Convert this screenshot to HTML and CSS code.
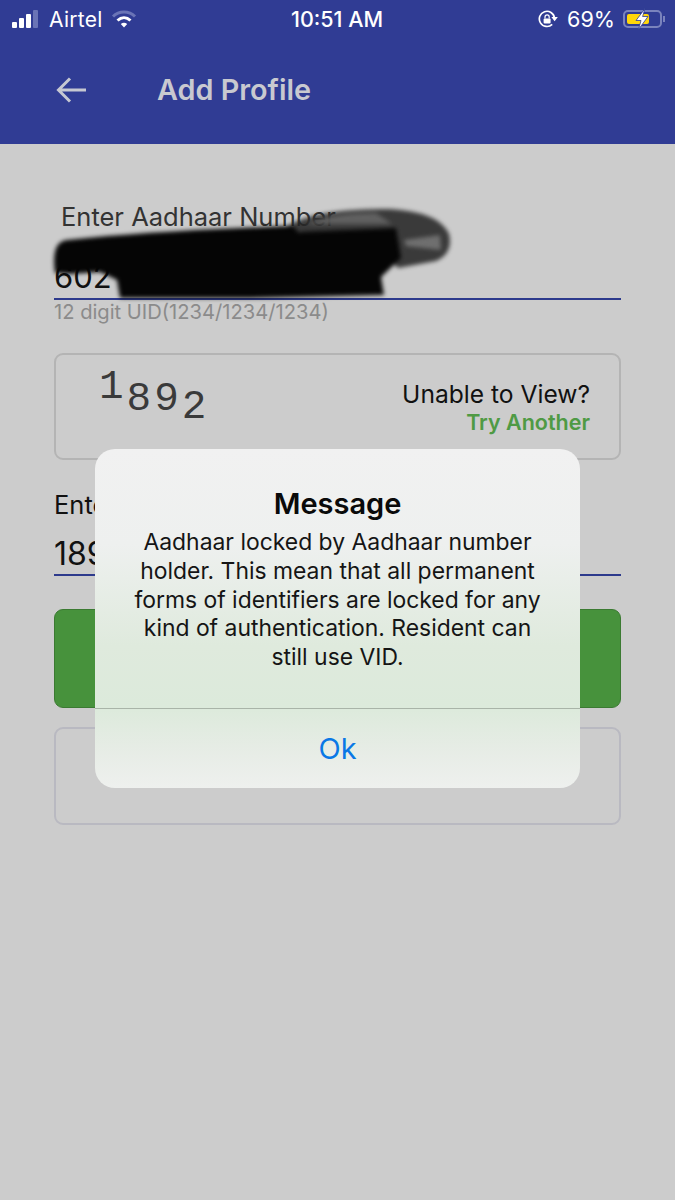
FILE: index.html
```html
<!DOCTYPE html>
<html lang="en">

<head>
    <meta charset="UTF-8">
    <meta name="viewport" content="width=device-width, initial-scale=1.0">
    <title>Add Profile</title>
    <link rel="stylesheet" href="styles.css">
</head>

<body>

    <div class="header">
        <div class="status-bar">
            <div class="status-left">
                <div class="signal">
                    <span class="bar bar-1"></span>
                    <span class="bar bar-2"></span>
                    <span class="bar bar-3"></span>
                    <span class="bar bar-4"></span>
                </div>
                <span class="carrier">Airtel</span>
                <svg class="wifi" width="26" height="20" viewBox="0 0 26 20">
                    <path d="M2 7.5C8 1.5 18 1.5 24 7.5" fill="none" stroke="#6a74b6" stroke-width="3" />
                    <path d="M6.5 11.5C10.5 7.8 15.5 7.8 19.5 11.5" fill="none" stroke="#fff" stroke-width="3" />
                    <path d="M9.8 15L13 18.5L16.2 15C14.2 13.4 11.8 13.4 9.8 15Z" fill="#fff" />
                </svg>
            </div>
            <span class="clock">10:51 AM</span>
            <div class="status-right">
                <svg class="rotation-lock" width="20" height="20" viewBox="0 0 20 20">
                    <path d="M14.2 15.4A7.6 7.6 0 1 1 16.5 9" fill="none" stroke="#fff" stroke-width="1.7" />
                    <path d="M13.4 8L19.8 8L16.6 12.2Z" fill="#fff" />
                    <rect x="5.6" y="9.4" width="7" height="5" rx="1" fill="#fff" />
                    <path d="M7 9.4V8A2.1 2.1 0 0 1 11.2 8V9.4" fill="none" stroke="#fff" stroke-width="1.2" />
                </svg>
                <span class="percent">69%</span>
                <div class="battery">
                    <div class="battery-body">
                        <div class="battery-level"></div>
                    </div>
                    <span class="battery-nub"></span>
                    <svg class="bolt" width="14" height="22" viewBox="0 0 14 22">
                        <path d="M10 0.5L1 12.5H6L3.5 21.5L13 8.5H7.6Z" fill="#fff" stroke="#303c94" stroke-width="0.8" />
                    </svg>
                </div>
            </div>
        </div>
        <div class="toolbar">
            <svg class="back" width="32" height="28" viewBox="0 0 32 28">
                <path d="M30 14H3M14 2.5L2.5 14L14 25.5" fill="none" stroke="#c6c8d2" stroke-width="3" />
            </svg>
            <h1 class="title">Add Profile</h1>
        </div>
    </div>

    <div class="form">
        <div class="aadhaar-field">
            <label class="label label-top">Enter Aadhaar Number</label>
            <div class="input-value">602</div>
            <svg class="scribble" width="420" height="110" viewBox="40 195 420 110">
                <path class="scribble-light" d="M284 228C305 214 340 209 390 209C420 211 442 218 449 234C452 246 448 256 436 261L398 268L380 250Z" />
                <path class="scribble-top" d="M306 224C325 216 350 213 376 213L392 224Z" />
                <path class="scribble-band" d="M404 240L440 235L441 250L406 246Z" />
                <path d="M55 273C52 250 57 241 67 240L87 238C150 232 230 228 292 226L299 232L396 228L401 258L381 277L384 295L250 298L120 298L117 280L100 272L70 274Z" fill="#050505" />
            </svg>
        </div>
        <p class="hint">12 digit UID(1234/1234/1234)</p>

        <div class="captcha-box">
            <div class="captcha"><span class="digit-1">1</span><span class="digit-2">8</span><span class="digit-3">9</span><span class="digit-4">2</span></div>
            <div class="captcha-help">
                <span class="unable">Unable to View?</span>
                <span class="try">Try Another</span>
            </div>
        </div>

        <label class="label label-captcha">Enter Captcha</label>
        <div class="input-captcha">1892</div>

        <div class="green-btn"></div>
        <div class="outline-btn"></div>
    </div>

    <div class="alert">
        <div class="alert-body">
            <h2 class="alert-title">Message</h2>
            <p class="alert-text">Aadhaar locked by Aadhaar number holder. This mean that all permanent forms of identifiers are locked for any kind of authentication. Resident can still use VID.</p>
        </div>
        <div class="alert-action">Ok</div>
    </div>

</body>

</html>
```

FILE: styles.css
```css
body {
    background-color: #cccccc;
    font-family: Inter, "Noto Sans", sans-serif;
    margin: 0;
    padding: 0;
    height: 1200px;
    overflow: hidden;
    position: relative;
}

.header {
    background-color: #303c94;
    height: 144px;
}

.status-bar {
    height: 38px;
    display: flex;
    justify-content: space-between;
    align-items: center;
    padding: 0 10px 0 12px;
    color: #fff;
    position: relative;
}

.status-left,
.status-right {
    display: flex;
    align-items: center;
}

.signal {
    display: flex;
    align-items: flex-end;
    gap: 2px;
    height: 18px;
}

.bar {
    width: 5px;
    background-color: #fff;
    border-radius: 1px;
}

.bar-1 {
    height: 6px;
}

.bar-2 {
    height: 10px;
}

.bar-3 {
    height: 14px;
}

.bar-4 {
    height: 18px;
    background-color: #6a74b6;
}

.carrier {
    font-size: 21px;
    margin-left: 11px;
    letter-spacing: 0.3px;
}

.wifi {
    margin-left: 8px;
}

.clock {
    position: absolute;
    left: 291px;
    font-size: 21.5px;
    font-weight: 500;
}

.percent {
    font-size: 21.6px;
    margin-left: 9px;
}

.battery {
    position: relative;
    display: flex;
    align-items: center;
    margin-left: 8px;
}

.battery-body {
    width: 39px;
    height: 18px;
    border: 2px solid #7a83bd;
    border-radius: 5px;
    padding: 2px;
    box-sizing: border-box;
}

.battery-level {
    width: 72%;
    height: 100%;
    background-color: #ffd60a;
    border-radius: 2px;
}

.battery-nub {
    width: 2px;
    height: 6px;
    margin-left: 1px;
    background-color: #7a83bd;
}

.bolt {
    position: absolute;
    left: 12px;
    top: -2px;
}

.toolbar {
    height: 103px;
    display: flex;
    align-items: center;
    padding-left: 56px;
}

.back {
    margin-right: 69px;
}

.title {
    margin: 0;
    color: #c8c9d0;
    font-size: 28.8px;
    font-weight: 600;
}

.form {
    padding: 0 54px;
}

.aadhaar-field {
    position: relative;
    height: 156px;
    border-bottom: 2px solid #2d3a8c;
    box-sizing: border-box;
}

.label {
    display: block;
    font-size: 25.5px;
    line-height: 30px;
    color: #333;
}

.label-top {
    padding: 58px 0 0 7px;
}

.input-value {
    color: #111;
    font-size: 31px;
    margin-top: 26px;
}

.scribble {
    position: absolute;
    left: -14px;
    top: 51px;
    filter: blur(2px);
}

.scribble-light {
    fill: #262626;
    opacity: 0.88;
}

.scribble-top {
    fill: #6a6a6a;
    opacity: 0.8;
}

.scribble-band {
    fill: #6f6f6f;
}

.hint {
    margin: 0;
    font-size: 20.15px;
    line-height: 24px;
    color: #8b8b8b;
}

.captcha-box {
    height: 107px;
    margin-top: 29px;
    border: 2px solid #b4b4b4;
    border-radius: 9px;
    box-sizing: border-box;
    display: flex;
    justify-content: space-between;
    padding: 0 29px 0 43px;
}

.captcha {
    font-family: "Liberation Mono", "DejaVu Sans Mono", monospace;
    font-size: 41px;
    color: #3a3a3a;
    line-height: 64px;
    height: 64px;
    letter-spacing: 3px;
}

.digit-1 {
    vertical-align: 8px;
}

.digit-2,
.digit-3 {
    vertical-align: -4px;
}

.digit-4 {
    vertical-align: -12px;
}

.captcha-help {
    display: flex;
    flex-direction: column;
    align-items: flex-end;
    padding-top: 24px;
}

.unable {
    font-size: 24.6px;
    color: #111;
}

.try {
    font-size: 21.5px;
    font-weight: 600;
    color: #4f9a44;
}

.label-captcha {
    color: #111;
    margin-top: 30px;
}

.input-captcha {
    color: #111;
    font-size: 32px;
    height: 56px;
    box-sizing: border-box;
    padding-top: 14px;
    border-bottom: 2px solid #2d3a8c;
}

.green-btn {
    height: 99px;
    margin-top: 33px;
    background-color: #47923c;
    border: 1px solid #3b7a32;
    border-radius: 9px;
    box-sizing: border-box;
}

.outline-btn {
    height: 98px;
    margin-top: 19px;
    border: 2px solid #b9b9c1;
    border-radius: 9px;
    box-sizing: border-box;
}

.alert {
    position: absolute;
    left: 95px;
    top: 449px;
    width: 485px;
    height: 339px;
    border-radius: 20px;
    overflow: hidden;
    display: flex;
    flex-direction: column;
    text-align: center;
    background: linear-gradient(#f1f1f1 0%, #eef0ef 28%, #dfeadd 58%, #dceadb 76%, #e6ece5 88%, #eef0ee 100%);
}

.alert-body {
    height: 260px;
    padding: 37px 36px 0;
    box-sizing: border-box;
    border-bottom: 1px solid #a9b4a8;
}

.alert-title {
    margin: 0;
    font-size: 29px;
    line-height: 36px;
    font-weight: 600;
    color: #0a0a0a;
}

.alert-text {
    margin: 6px 0 0;
    font-size: 22.9px;
    line-height: 28.8px;
    color: #151515;
}

.alert-action {
    flex: 1;
    display: flex;
    align-items: center;
    justify-content: center;
    color: #0a78e6;
    font-size: 29px;
}
```
